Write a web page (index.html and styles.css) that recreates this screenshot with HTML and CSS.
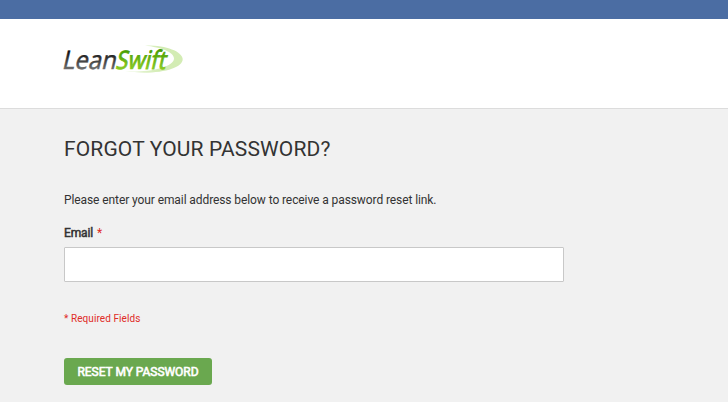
FILE: index.html
```html
<!DOCTYPE html>
<html lang="en">
<head>
<meta charset="utf-8">
<title>Forgot Your Password?</title>
<link rel="stylesheet" href="styles.css">
</head>
<body>
<div class="topbar"></div>
<header class="header">
  <svg class="logo" width="122" height="32" viewBox="0 0 122 32" role="img" aria-label="LeanSwift">
    <defs>
      <linearGradient id="dark" x1="0" y1="0" x2="0" y2="1">
        <stop offset=".3" stop-color="#111"/><stop offset=".85" stop-color="#777"/>
      </linearGradient>
      <linearGradient id="green" x1="0" y1="0" x2="0" y2="1">
        <stop offset=".25" stop-color="#459c00"/><stop offset=".85" stop-color="#91cf22"/>
      </linearGradient>
      <linearGradient id="pale" x1="0" y1="0" x2="1" y2="0">
        <stop offset="0" stop-color="#eef8e2"/><stop offset=".6" stop-color="#d3ecb4"/>
      </linearGradient>
    </defs>
    <path class="swoosh" d="M82 1.500C102 1 119 7 119.700 15C120 25 94 31.500 62 27.500C88 28.500 111 23 111 14.500C111 8 98 3.500 82 1.500Z"/>
    <g transform="translate(0 24.500) skewX(-13)">
      <text class="word lean" x="-1.500" y="0" textLength="54" lengthAdjust="spacingAndGlyphs">Lean</text>
      <text class="word swift" x="52" y="0" textLength="50" lengthAdjust="spacingAndGlyphs">Swift</text>
    </g>
  </svg>
</header>
<main class="content">
  <h1 class="title">Forgot Your Password?</h1>
  <form class="form">
    <p class="note">Please enter your email address below to receive a password reset link.</p>
    <label class="label" for="email"><span class="label-text">Email</span><span class="star">*</span></label>
    <input class="input" id="email" type="email">
    <p class="required">* Required Fields</p>
    <button class="submit" type="button"><span>Reset My Password</span></button>
  </form>
</main>
</body>
</html>
```
FILE: styles.css
```css
* { box-sizing: border-box; }
body {
  margin: 0;
  height: 402px;
  overflow: hidden;
  background: #f1f1f1;
  color: #333;
  font-family: Roboto, sans-serif;
  font-size: 12px;
}
.topbar { height: 19px; background: #4b6da3; }
.header {
  height: 90px;
  padding: 25px 63px 0;
  background: #fff;
  border-bottom: 1px solid #dcdcdc;
}
.logo { display: block; overflow: visible; }
.word { font: 25.5px "Noto Sans", sans-serif; }
.lean { fill: url(#dark); stroke: url(#dark); stroke-width: .4px; }
.swift { fill: url(#green); stroke: url(#green); stroke-width: .8px; }
.swoosh { fill: url(#pale); }
.content { padding: 27px 64px 0; }
.title {
  margin: 0;
  font-size: 21px;
  font-weight: 400;
  line-height: 26px;
  letter-spacing: .14px;
  text-transform: uppercase;
}
.form { display: flex; flex-direction: column; align-items: flex-start; }
.note { margin: 30px 0 0; line-height: 16px; letter-spacing: -.092px; }
.label { display: flex; gap: 4px; margin-top: 17px; line-height: 16px; }
.label-text { letter-spacing: -.15px; -webkit-text-stroke: .5px #333; }
.star { color: #e02b27; }
.input {
  width: 500px;
  height: 35px;
  margin: 6px 0 0;
  border: 1px solid #c8c8c8;
  border-radius: 1px;
  background: #fff;
}
.required { margin: 29px 0 0; font-size: 10px; line-height: 16px; letter-spacing: .08px; color: #e02b27; }
.submit {
  width: 148px;
  height: 27px;
  margin: 31px 0 0;
  padding: 1px 0 0;
  border: 0;
  border-radius: 3px;
  background: #6aa84f;
  color: #fff;
  font: 12px/26px Roboto, sans-serif;
  letter-spacing: -.04px;
  text-transform: uppercase;
  -webkit-text-stroke: .6px #fff;
}
```
